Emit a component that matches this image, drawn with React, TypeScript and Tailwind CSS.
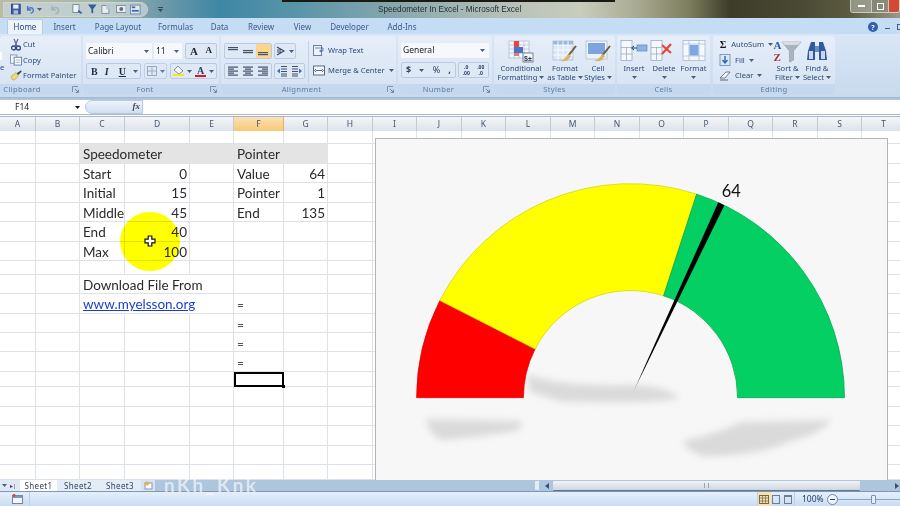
import React from "react";

const colLabels = ["A","B","C","D","E","F","G","H","I","J","K","L","M","N","O","P","Q","R","S","T"];
const colW = [36,44,45,65,44,50,44,45,44,45,44,45,44,45,44,45,44,45,44,44];
const rowH = [13,20,19,20,19,20,19,14,19,20,19,19,20,15,20,19,20,19,15];

type Cell = { t?: string; right?: boolean; span?: number; cls?: string };
const eq = "!text-[#555] !text-[12px]";
const data: Record<number, Record<number, Cell>> = {
  1: { 2: { t: "Speedometer", span: 3, cls: "bg-[#e4e4e4] !border-transparent" }, 5: { t: "Pointer", span: 2, cls: "bg-[#e4e4e4] !border-transparent" } },
  2: { 2: { t: "Start" }, 3: { t: "0", right: true }, 5: { t: "Value" }, 6: { t: "64", right: true } },
  3: { 2: { t: "Initial" }, 3: { t: "15", right: true }, 5: { t: "Pointer" }, 6: { t: "1", right: true } },
  4: { 2: { t: "Middle" }, 3: { t: "45", right: true }, 5: { t: "End" }, 6: { t: "135", right: true } },
  5: { 2: { t: "End" }, 3: { t: "40", right: true } },
  6: { 2: { t: "Max" }, 3: { t: "100", right: true } },
  8: { 2: { t: "Download File From", span: 3 } },
  9: { 2: { t: "www.myelsson.org", span: 3, cls: "!text-[#1a3fd0] underline" }, 5: { t: "=", cls: eq } },
  10: { 5: { t: "=", cls: eq } },
  11: { 5: { t: "=", cls: eq } },
  12: { 5: { t: "=", cls: eq } },
};

function Sheet() {
  const out: React.ReactNode[] = [];
  rowH.forEach((_, r) => {
    let c = 0;
    while (c < colW.length) {
      const d = data[r]?.[c];
      const span = d?.span ?? 1;
      out.push(
        <div
          key={r + "-" + c}
          style={{ gridColumn: `span ${span}` }}
          className={
            "flex items-center whitespace-nowrap pl-[3px] pr-[2px] pt-[3px] border-r border-b border-[#dde2e8] text-[13.5px] leading-none text-[#2a2a2a] " +
            (d?.right ? "justify-end " : "") +
            (d?.cls ?? "")
          }
        >
          {d?.t}
        </div>
      );
      c += span;
    }
  });
  return (
    <div className="grid grid-cols-[36px_44px_45px_65px_44px_50px_44px_45px_44px_45px_44px_45px_44px_45px_44px_45px_44px_45px_44px_44px] grid-rows-[13px_20px_19px_20px_19px_20px_19px_14px_19px_20px_19px_19px_20px_15px_20px_19px_20px_19px_15px] font-['Lato',sans-serif] w-[910px]">
      {out}
    </div>
  );
}

const CX = 630.5;
const CY = 397.5;
function pt(r: number, deg: number) {
  const a = (deg * Math.PI) / 180;
  return `${(CX - r * Math.cos(a)).toFixed(2)} ${(CY - r * Math.sin(a)).toFixed(2)}`;
}
function seg(r0: number, r1: number, a0: number, a1: number) {
  return `M${pt(r1, a0)} A${r1} ${r1} 0 0 1 ${pt(r1, a1)} L${pt(r0, a1)} A${r0} ${r0} 0 0 0 ${pt(r0, a0)} Z`;
}

function Gauge() {
  return (
    <svg viewBox="375 138 513 342" className="block w-full h-full">
      <defs>
        <filter id="sh" x="-20%" y="-50%" width="140%" height="200%">
          <feGaussianBlur stdDeviation="3.6" />
        </filter>
        <linearGradient id="nd" x1="0" y1="1" x2="0" y2="0">
          <stop offset="0" stopColor="#000" stopOpacity="0.25" />
          <stop offset="0.12" stopColor="#000" />
        </linearGradient>
      </defs>
      <g fill="#dadada" filter="url(#sh)">
        <path d="M526 374 Q560 386 620 385 Q662 383 680 398 Q640 405 560 401 L530 392 Z" />
        <path d="M425 419 L521 421 L519 430 Q470 439 440 440 Q427 433 425 419 Z" />
        <path d="M683 441 Q720 433 741 422 L832 420 Q825 432 790 442 Q750 458 702 456 Q686 450 683 441 Z" />
      </g>
      <path d={seg(107.5, 214.8, 0, 27)} fill="#ff0000" stroke="#e00000" strokeWidth="0.7" />
      <path d={seg(107.5, 214.8, 27, 108)} fill="#ffff00" stroke="#d0d000" strokeWidth="0.7" />
      <path d={seg(107.5, 214.8, 108, 180)} fill="#03cf62" stroke="#02a850" strokeWidth="0.8" />
      <path d={`M${pt(5, 115.2)} L${pt(215, 114.2)} L${pt(215, 116)} Z`} fill="url(#nd)" />
      <text x="722" y="196" fontFamily="Lato, sans-serif" fontSize="16.5" fill="#111">64</text>
    </svg>
  );
}

/* ---------- small icons ---------- */
const Save = () => (
  <svg width="11" height="12" viewBox="0 0 11 12"><rect x="0.5" y="0.5" width="10" height="11" fill="#3c5db0" stroke="#27408a" /><rect x="2.5" y="1" width="6" height="4.5" fill="#e9eef8" /><rect x="3" y="7.5" width="5" height="4" fill="#aebde0" /></svg>
);
const Undo = ({ c = "#4a76c4" }: { c?: string }) => (
  <svg width="11" height="11" viewBox="0 0 11 11" fill="none"><path d="M3 1.5 V6 H7 M3.4 5.6 C5 2.5 9 3 9.5 6 C9.7 8 8 9.5 6.5 10" stroke={c} strokeWidth="1.6" /></svg>
);
const Caret = ({ c = "#4a5f7c" }: { c?: string }) => (
  <svg width="5" height="3" viewBox="0 0 5 3" className="shrink-0"><path d="M0 0 H5 L2.5 3 Z" fill={c} /></svg>
);
const Lines = ({ kind }: { kind: "l" | "c" | "r" | "t" | "m" | "b" }) => {
  const rows = kind === "t" ? [2, 4] : kind === "m" ? [5, 7] : kind === "b" ? [8, 10] : [1.5, 3.5, 5.5, 7.5, 9.5];
  return (
    <svg width="12" height="12" viewBox="0 0 12 12">
      {rows.map((y, i) => {
        const short = i % 2 === 1 && rows.length > 2;
        const w = short ? 6 : 10;
        const x = kind === "c" ? (12 - w) / 2 : kind === "r" ? 11 - w : 1;
        return <rect key={y} x={x} y={y} width={w} height="1.2" fill="#44506a" />;
      })}
    </svg>
  );
};
const Indent = ({ flip }: { flip?: boolean }) => (
  <svg width="12" height="12" viewBox="0 0 12 12" style={{ transform: flip ? "scaleX(-1)" : undefined }}>
    {[1, 3.5, 6, 8.5, 10.5].map((y) => <rect key={y} x="5" y={y} width="6" height="1" fill="#44506a" />)}
    <path d="M4 3.5 L1 6 L4 8.5 Z" fill="#3a70b8" />
  </svg>
);
const Launcher = () => (
  <svg width="7" height="7" viewBox="0 0 7 7" fill="none"><path d="M0.5 6 V0.5 H6" stroke="#7e93ad" /><path d="M3 3 L6.2 6.2 M6.4 3.8 V6.4 H3.8" stroke="#5d7aa0" strokeWidth="0.9" /></svg>
);

const Scissors = () => (
  <svg width="12" height="13" viewBox="0 0 12 13" fill="none"><path d="M4 1 L7 8 M8 1 L5 8" stroke="#5b6a80" strokeWidth="1.2" /><circle cx="3.6" cy="10" r="2" stroke="#2f4a80" strokeWidth="1.3" /><circle cx="8.4" cy="10" r="2" stroke="#2f4a80" strokeWidth="1.3" /></svg>
);
const CopyIco = () => (
  <svg width="13" height="12" viewBox="0 0 13 12"><rect x="0.5" y="0.5" width="7" height="9" fill="#f4f7fb" stroke="#7e94b4" /><rect x="4.5" y="3" width="8" height="8.5" fill="#ffffff" stroke="#5d7ca8" /><rect x="6" y="5.5" width="5" height="1" fill="#9db2cf" /><rect x="6" y="8" width="5" height="1" fill="#9db2cf" /></svg>
);
const Brush = () => (
  <svg width="14" height="13" viewBox="0 0 14 13"><path d="M1 8 L7 3 L10 7 L5 12 Q2 12 1 8 Z" fill="#efd77c" stroke="#a88a3a" strokeWidth="0.6" /><path d="M8 4 L13 0.5 L13.5 2 L9.5 6 Z" fill="#36404e" /></svg>
);

const BigGrid = ({ children }: { children?: React.ReactNode }) => (
  <svg width="28" height="24" viewBox="0 0 28 24">
    {children}
  </svg>
);
const CondIco = () => (
  <BigGrid>
    <rect x="2" y="2" width="20" height="17" fill="#f2f6fb" stroke="#9cb0c8" strokeWidth="0.6" />
    {[7, 12, 17].map((x) => <path key={x} d={`M${x} 2 V19`} stroke="#a8bace" strokeWidth="0.6" />)}
    {[6, 10, 14].map((y) => <path key={y} d={`M2 ${y} H22`} stroke="#a8bace" strokeWidth="0.6" />)}
    <rect x="7" y="2" width="5" height="6" fill="#e64545" />
    <rect x="7" y="8" width="9" height="6" fill="#4a74c8" />
    <rect x="7" y="14" width="5" height="3" fill="#e97b6c" />
    <rect x="16" y="14" width="10" height="9" fill="#f6f7fa" stroke="#5a6a80" strokeWidth="0.8" />
    <text x="17" y="21.5" fontSize="7" fontWeight="700" fill="#2a3650" fontFamily="Liberation Sans, sans-serif">$±</text>
  </BigGrid>
);
const TableIco = () => (
  <BigGrid>
    <rect x="2" y="2" width="20" height="19" fill="#dbe6f6" stroke="#9cb0c8" strokeWidth="0.6" />
    <rect x="2" y="2" width="20" height="4" fill="#9db8de" />
    {[7, 12, 17].map((x) => <path key={x} d={`M${x} 2 V21`} stroke="#fff" strokeWidth="0.8" />)}
    {[6, 11, 16].map((y) => <path key={y} d={`M2 ${y} H22`} stroke="#fff" strokeWidth="0.8" />)}
    <path d="M25 7 L17 17" stroke="#6d5a38" strokeWidth="2" />
    <path d="M18 15 L14 19 Q12 21 9 22 Q14 23 17 21 L20 17 Z" fill="#d8b55e" />
  </BigGrid>
);
const StylesIco = () => (
  <BigGrid>
    <rect x="2" y="2" width="21" height="18" fill="#eef3fa" stroke="#9cb0c8" strokeWidth="0.6" />
    <rect x="4" y="4" width="17" height="11" fill="#7da3e0" />
    <path d="M26 7 L18 17" stroke="#6d5a38" strokeWidth="2" />
    <path d="M19 15 L15 19 Q13 21 10 22 Q15 23 18 21 L21 17 Z" fill="#d8b55e" />
  </BigGrid>
);
const cellsGrid = (
  <>
    <rect x="1" y="1.5" width="11" height="20" fill="#f5f8fc" stroke="#8fa3bd" strokeWidth="0.7" />
    <path d="M1 8.5 H12 M1 15 H12 M6.5 8.5 V21" stroke="#8fa3bd" strokeWidth="0.7" />
  </>
);
const InsertIco = () => (
  <BigGrid>
    {cellsGrid}
    <rect x="17" y="6" width="10" height="6" fill="#8fb2e4" stroke="#5b84c0" strokeWidth="0.7" />
    <path d="M12 9 H17 M14 7 L11.5 9 L14 11" stroke="#1f3f74" strokeWidth="1" fill="none" />
  </BigGrid>
);
const DeleteIco = () => (
  <BigGrid>
    {cellsGrid}
    <path d="M12 6 L21 14 M21 5 L12 15" stroke="#e0483a" strokeWidth="2.2" />
  </BigGrid>
);
const FormatIco = () => (
  <BigGrid>
    <rect x="3" y="1.5" width="22" height="20" fill="#f5f8fc" stroke="#9fb1c8" strokeWidth="0.7" />
    <path d="M3 5 H25 M9 1.5 V21.5 M19 1.5 V21.5 M3 17 H25" stroke="#a8bace" strokeWidth="0.7" />
    <rect x="9.5" y="6" width="9" height="10.5" fill="#7ea7e6" />
  </BigGrid>
);
const SortIco = () => (
  <svg width="30" height="24" viewBox="0 0 30 24">
    <text x="0.5" y="10" fontSize="11" fontWeight="700" fill="#2b5cab" fontFamily="Liberation Serif, serif">A</text>
    <text x="0.5" y="22" fontSize="11" fontWeight="700" fill="#a3313d" fontFamily="Liberation Serif, serif">Z</text>
    <path d="M9 3 H28 L20.5 12 V21 L16.5 23 V12 Z" fill="#aab4be" stroke="#7f8b97" strokeWidth="0.5" />
    <path d="M9 3 H28 L25 6 H12 Z" fill="#d8dde3" />
  </svg>
);
const BinoIco = () => (
  <svg width="22" height="22" viewBox="0 0 22 22">
    <path d="M2 11 L5 2 H9 V20 H1 Z" fill="#2f5a9e" />
    <path d="M20 11 L17 2 H13 V20 H21 Z" fill="#2f5a9e" />
    <rect x="9" y="6" width="4" height="6" fill="#6d8cc0" />
    <rect x="3" y="11" width="4" height="8" fill="#c9d8ef" />
    <rect x="15" y="11" width="4" height="8" fill="#c9d8ef" />
  </svg>
);

function Group({ w, label, children, launch, labelCls = "" }: { w: string; label: string; children: React.ReactNode; launch?: boolean; labelCls?: string }) {
  return (
    <div className={"flex flex-col shrink-0 h-[59px] rounded-[3px] overflow-hidden bg-gradient-to-b from-[#e6eef9] to-[#d5e2f3] " + w}>
      <div className="flex-1 relative min-h-0">{children}</div>
      <div className={"relative h-[11px] bg-[#c5d8ee] text-center text-[7.6px] leading-[11px] text-[#5d7da6] tracking-[0.3px] " + labelCls}>
        {label}
        {launch && <span className="absolute right-[2px] top-[2px]"><Launcher /></span>}
      </div>
    </div>
  );
}
const Box = ({ w, children, cls = "" }: { w: string; children?: React.ReactNode; cls?: string }) => (
  <div className={"flex items-center justify-around h-[16px] rounded-[2px] border border-[#b9cbe2] bg-[#dfe9f6] " + w + " " + cls}>{children}</div>
);
const Big = ({ w, icon, a, b, caret }: { w: string; icon: React.ReactNode; a: string; b?: string; caret?: boolean }) => (
  <div className={"flex flex-col items-center pt-[3px] shrink-0 " + w}>
    <div className="h-[24px] flex items-center justify-center">{icon}</div>
    <div className="mt-[1px] text-[7.6px] leading-[9px] text-[#2e4a75] text-center whitespace-nowrap">{a}</div>
    <div className="flex items-center justify-center gap-[2px] h-[9px] text-[7.6px] leading-[9px] text-[#2e4a75] whitespace-nowrap">
      {b}
      {caret && <Caret />}
    </div>
  </div>
);

function Ribbon() {
  return (
    <div className="flex gap-[2px] h-[63px] pt-[2px] bg-gradient-to-b from-[#d9e6f5] to-[#c9daee] font-['Noto_Sans',sans-serif] text-[#2e4a75]">
      <Group w="w-[81px]" label="Clipboard" launch labelCls="pr-[37px]">
        <div className="absolute left-0 top-[16px] w-[2px] h-[8px] bg-white" />
        <span className="absolute left-0 top-[27px] text-[7.6px] leading-[9px]">e</span>
        <div className="flex flex-col pl-[10px] pt-[1px] text-[7.6px]">
          {[
            [<Scissors key="s" />, "Cut"],
            [<CopyIco key="c" />, "Copy"],
            [<Brush key="b" />, "Format Painter"],
          ].map(([ic, t], i) => (
            <div key={i} className="flex items-center gap-[1px] h-[15.5px] whitespace-nowrap">
              <span className="w-[12px] flex justify-center">{ic}</span>
              {t}
            </div>
          ))}
        </div>
      </Group>
      <Group w="w-[136px]" label="Font" launch labelCls="pr-[12px]">
        <div className="flex flex-col gap-[4px] pl-[3px] pt-[7px]">
          <div className="flex gap-[2px]">
            <div className="flex items-center justify-between pl-[2px] pr-[3px] h-[16px] w-[66px] bg-[#f5f8fc] text-[8.5px] text-[#222]">Calibri<Caret /></div>
            <div className="flex items-center justify-between pl-[2px] pr-[3px] h-[16px] w-[28px] bg-[#f5f8fc] text-[8.5px] text-[#222]">11<Caret /></div>
            <Box w="w-[32px] ml-[1px]">
              <span className="text-[11px] font-bold font-['Liberation_Serif',serif] text-[#223]">A</span>
              <span className="text-[9px] font-bold font-['Liberation_Serif',serif] text-[#223]">A</span>
            </Box>
          </div>
          <div className="flex gap-[3px]">
            <Box w="w-[55px]" cls="!justify-between pl-[4px] pr-[2px] font-['Liberation_Serif',serif] text-[10px] text-[#1c2a44]">
              <b>B</b><i className="font-bold">I</i><b className="underline ml-[3px]">U</b><Caret />
            </Box>
            <Box w="w-[23px]" cls="opacity-80">
              <svg width="10" height="10" viewBox="0 0 10 10" fill="none" stroke="#8d9db3"><rect x="0.5" y="0.5" width="9" height="9" /><path d="M5 0 V10 M0 5 H10" /></svg>
              <Caret />
            </Box>
            <Box w="w-[47px]">
              <span className="flex flex-col items-center">
                <svg width="11" height="8" viewBox="0 0 11 8"><path d="M5 0 L10 5 L6 8 L1 4 Z" fill="#f4f6fa" stroke="#5a6a80" strokeWidth="0.7" /></svg>
                <span className="w-[11px] h-[2px] bg-[#f2ec1e]" />
              </span>
              <Caret />
              <span className="flex flex-col items-center leading-none">
                <span className="text-[10px] h-[9px] leading-[9px] font-bold font-['Liberation_Serif',serif] text-[#2b3e66]">A</span>
                <span className="w-[11px] h-[2px] bg-[#e0141c]" />
              </span>
              <Caret />
            </Box>
          </div>
        </div>
      </Group>
      <Group w="w-[175px]" label="Alignment" launch labelCls="pr-[14px]">
        <div className="flex">
          <div className="flex flex-col gap-[4px] pl-[3px] pt-[7px] w-[87px]">
            <div className="flex gap-[2px]">
              <Box w="w-[48px]" cls="!justify-between overflow-hidden">
                <span className="w-[16px] flex justify-center"><Lines kind="t" /></span>
                <span className="w-[16px] flex justify-center"><Lines kind="m" /></span>
                <span className="w-[16px] h-full flex justify-center bg-[#fbd58b]"><Lines kind="b" /></span>
              </Box>
              <Box w="w-[22px]">
                <svg width="11" height="10" viewBox="0 0 11 10"><path d="M1 1 L8 5 L1 9 M1 4 H5 M1 6 H5" stroke="#34425e" strokeWidth="1.1" fill="none" /></svg>
                <Caret />
              </Box>
            </div>
            <div className="flex gap-[2px]">
              <Box w="w-[48px]"><Lines kind="l" /><Lines kind="c" /><Lines kind="r" /></Box>
              <Box w="w-[31px]"><Indent /><Indent flip /></Box>
            </div>
          </div>
          <div className="w-px h-[42px] mt-[5px] bg-[#c2d2e6]" />
          <div className="flex flex-col gap-[5px] pl-[4px] pt-[7px] text-[7.6px] whitespace-nowrap">
            <div className="flex items-center gap-[3px] h-[15px]">
              <svg width="12" height="11" viewBox="0 0 12 11"><rect x="0.5" y="0.5" width="8" height="10" fill="#eef3fa" stroke="#6f7f96" /><path d="M2 3 H10 V6 H7 M8 5 L6.5 6 L8 7" stroke="#3a6ab0" fill="none" strokeWidth="0.8" /></svg>
              Wrap Text
            </div>
            <div className="flex items-center gap-[3px] h-[15px]">
              <svg width="12" height="11" viewBox="0 0 12 11"><rect x="0.5" y="1" width="11" height="9" fill="#f2f5fa" stroke="#5d6b80" /><path d="M3 5.5 H9 M3 4 L1.6 5.5 L3 7 M9 4 L10.4 5.5 L9 7" stroke="#34425e" fill="none" strokeWidth="0.8" /></svg>
              Merge &amp; Center
              <span className="ml-[1px]"><Caret /></span>
            </div>
          </div>
        </div>
      </Group>
      <Group w="w-[94px]" label="Number" launch labelCls="pr-[13px]">
        <div className="flex flex-col gap-[4px] pl-[3px] pt-[7px]">
          <div className="flex items-center justify-between pl-[2px] pr-[4px] h-[15px] w-[88px] bg-[#f5f8fc] text-[8.5px] text-[#222]">General<Caret /></div>
          <div className="flex gap-[2px]">
            <Box w="w-[55px]" cls="text-[9px] font-bold text-[#2c3d60]">
              <span>$</span><Caret /><span className="font-normal">%</span><span>,</span>
            </Box>
            <Box w="w-[31px]" cls="text-[5px] leading-[6px] text-[#2c3d60] font-bold">
              <span className="flex flex-col items-center"><span>.0</span><span>.00</span></span>
              <span className="flex flex-col items-center"><span>.00</span><span>.0</span></span>
            </Box>
          </div>
        </div>
      </Group>
      <Group w="w-[121px]" label="Styles">
        <div className="flex">
          <Big w="w-[54px]" icon={<CondIco />} a="Conditional" b="Formatting" caret />
          <Big w="w-[34px]" icon={<TableIco />} a="Format" b="as Table" caret />
          <Big w="w-[32px]" icon={<StylesIco />} a="Cell" b="Styles" caret />
        </div>
      </Group>
      <Group w="w-[93px]" label="Cells">
        <div className="flex pl-[2px]">
          <Big w="w-[30px]" icon={<InsertIco />} a="Insert" caret />
          <Big w="w-[30px]" icon={<DeleteIco />} a="Delete" caret />
          <Big w="w-[29px]" icon={<FormatIco />} a="Format" caret />
        </div>
      </Group>
      <Group w="w-[122px] ml-[1px]" label="Editing">
        <div className="flex">
          <div className="flex flex-col pl-[6px] pt-[1px] w-[60px] text-[7.6px] whitespace-nowrap">
            <div className="flex items-center gap-[4px] h-[15.5px]">
              <span className="w-[12px] text-center text-[10px] font-bold font-['Liberation_Serif',serif] text-[#111]">Σ</span>AutoSum<Caret />
            </div>
            <div className="flex items-center gap-[4px] h-[15.5px]">
              <svg width="12" height="12" viewBox="0 0 12 12"><rect x="1" y="0.5" width="10" height="11" fill="#dbe6f6" stroke="#7f9ac0" /><path d="M6 2 V8 M3.5 6 L6 9 L8.5 6" stroke="#2e62b8" strokeWidth="1.4" fill="none" /></svg>
              Fill<Caret />
            </div>
            <div className="flex items-center gap-[4px] h-[15.5px]">
              <svg width="12" height="11" viewBox="0 0 12 11"><path d="M1 8 L7 2 H11 L6 8 Z" fill="#f6f7fa" stroke="#55606f" strokeWidth="0.8" /><path d="M1 10 H9" stroke="#55606f" /></svg>
              Clear<Caret />
            </div>
          </div>
          <Big w="w-[29px]" icon={<SortIco />} a="Sort &" b="Filter" caret />
          <Big w="w-[30px]" icon={<BinoIco />} a="Find &" b="Select" caret />
        </div>
      </Group>
    </div>
  );
}

export default function App() {
  const tabs: [string, string][] = [
    ["Insert", "w-[43px]"], ["Page Layout", "w-[64px]"], ["Formulas", "w-[51px]"], ["Data", "w-[37px]"],
    ["Review", "w-[46px]"], ["View", "w-[37px]"], ["Developer", "w-[57px]"], ["Add-Ins", "w-[48px]"],
  ];
  return (
    <div className="relative flex flex-col w-[900px] h-[506px] overflow-hidden bg-white font-['Noto_Sans',sans-serif] blur-[0.4px]">
      {/* title bar */}
      <div className="relative flex items-center justify-between h-[18px] bg-[linear-gradient(90deg,#b8bca0_0px,#a8b8a8_100px,#6f9aa8_160px,#3f87a6_220px,#5a95a8_300px,#8aa8ac_400px,#b4bfb6_500px,#c8cdbd_580px,#a8a890_640px,#7c7c5e_690px,#3c3c28_730px,#4a4a34_800px,#5c5a40_850px,#9a9a88_900px)]">
        <div className="flex items-center gap-[4px] ml-[3px] pl-[7px] pr-[6px] h-[15px] w-[145px] rounded-r-[9px] border border-[#cfd6cf] bg-[#c9d7e0]/70">
          <Save />
          <Undo />
          <span className="ml-[-1px]"><Caret /></span>
          <span className="opacity-40 ml-[3px]"><Undo c="#7f8f9f" /></span>
          <svg className="ml-[8px]" width="12" height="12" viewBox="0 0 12 12"><rect x="1" y="1" width="7" height="9" fill="#f1f4f8" stroke="#6f84a0" /><path d="M7 8 L11 11" stroke="#2b5fa8" strokeWidth="2" /></svg>
          <svg width="12" height="12" viewBox="0 0 12 12"><path d="M1 1 H11 L7 6 V11 L5 10 V6 Z" fill="#2e5e9e" /></svg>
          <svg width="12" height="12" viewBox="0 0 12 12"><rect x="1" y="2" width="8" height="9" fill="#e9edf2" stroke="#7a8794" /><rect x="6" y="0.5" width="5" height="6" fill="#b8c4d0" /></svg>
          <svg width="12" height="12" viewBox="0 0 12 12"><rect x="0.5" y="2" width="11" height="8" fill="#e9edf2" stroke="#7a8794" /><circle cx="6" cy="6" r="2.2" fill="#66717e" /></svg>
          <svg width="12" height="11" viewBox="0 0 12 11"><rect x="0.5" y="0.5" width="11" height="10" fill="#e2e8f0" stroke="#6f84a0" /><rect x="2" y="2" width="4" height="2" fill="#3a6ab0" /><rect x="2" y="6" width="8" height="2" fill="#3a6ab0" /></svg>
        </div>
        <div className="ml-[5px] flex flex-col items-center gap-[1px] mr-auto pl-[5px]">
          <span className="w-[5px] h-px bg-[#33455e]" />
          <Caret c="#33455e" />
        </div>
        <div className="absolute left-[282px] top-0 w-[333px] h-[2px] bg-[#1a1a14]" />
        <div className="absolute left-[378px] top-[3px] font-['Liberation_Sans',sans-serif] text-[8.2px] leading-[14px] text-[#1e2a30] whitespace-nowrap">Speedometer In Excel - Microsoft Excel</div>
        <div className="flex h-[13px] self-start w-[50px] rounded-b-[3px] border border-[#dfe2dc]/80 border-t-0 overflow-hidden">
          <div className="flex items-center justify-center w-[22px] bg-[#a8ab9e]/70 border-r border-[#dfe2dc]/70"><span className="w-[7px] h-[2px] bg-white" /></div>
          <div className="flex items-center justify-center w-[18px] bg-[#8b8d7e]/70 border-r border-[#dfe2dc]/70"><span className="w-[7px] h-[7px] border border-white" /></div>
          <div className="w-[10px] bg-[#d24a36]" />
        </div>
      </div>
      {/* tabs */}
      <div className="flex items-end h-[16px] pl-[7px] bg-[#c5dcf5] text-[8px] text-[#3a5a88]">
        <div className="flex items-center justify-center w-[36px] h-[15px] rounded-t-[2px] bg-[#edf3fa] border border-b-0 border-[#b5cae4] text-[#2c4a78]">Home</div>
        {tabs.map(([t, w]) => (
          <div key={t} className={"flex items-center justify-center h-[15px] whitespace-nowrap " + w}>{t}</div>
        ))}
        <div className="ml-auto flex items-center gap-[7px] pb-[2px] translate-x-[3px]">
          <span className="flex items-center justify-center w-[10px] h-[10px] rounded-full bg-[#2f5fb0] text-[7px] font-bold leading-none text-white">?</span>
          <span className="w-[5px] h-px mt-[3px] bg-[#4b5d75]" />
          <span className="w-[6px] h-[6px] border border-[#4b5d75]" />
        </div>
      </div>
      <Ribbon />
      <div className="h-[3px] bg-gradient-to-b from-[#9fb7d2] to-[#b7cbe2]" />
      {/* formula bar */}
      <div className="flex items-center h-[15px] bg-white border-b border-[#a9b8cc]">
        <div className="flex items-center justify-between w-[81px] pl-[15px] pr-[1px] text-[8.5px] text-[#222]">F14<Caret c="#111" /></div>
        <div className="flex items-center justify-end ml-[4px] w-[58px] h-[14px] rounded-l-[7px] border border-[#b8c9de] bg-gradient-to-b from-[#eef4fb] to-[#cfdeef] pr-[2px]">
          <i className="font-['Liberation_Serif',serif] text-[9px] font-bold text-[#3a4a60]">fx</i>
        </div>
      </div>
      <div className="h-px bg-white" />
      {/* column header */}
      <div className="flex h-[15px] border-t border-[#a9b8cc] text-[8.5px] text-[#44566e]">
        {colLabels.map((l, i) => (
          <div
            key={l}
            style={{ width: colW[i] }}
            className={
              "shrink-0 flex items-center justify-center border-r " +
              (l === "F"
                ? "bg-gradient-to-b from-[#fbe2b4] to-[#f8c877] border-[#e2b060]"
                : "bg-gradient-to-b from-[#f4f6f9] to-[#dde3ea] border-[#c2ccd8]")
            }
          >
            {l}
          </div>
        ))}
      </div>
      {/* sheet */}
      <div className="relative h-[349px] overflow-hidden">
        <Sheet />
        <div className="absolute left-[234px] top-[241px] w-[50px] h-[15px] border-2 border-black" />
        <div className="absolute left-[282px] top-[254px] w-[3px] h-[3px] bg-black" />
        <div className="absolute left-[120px] top-[81px] w-[60px] h-[59px] rounded-full bg-[#ffff00] mix-blend-multiply" />
        <svg className="absolute left-[144px] top-[104px]" width="12" height="12" viewBox="0 0 12 12">
          <path d="M4.2 1 H7.8 V4.2 H11 V7.8 H7.8 V11 H4.2 V7.8 H1 V4.2 H4.2 Z" fill="#fff" stroke="#111" strokeWidth="1.2" />
        </svg>
        <div className="absolute left-[375px] top-[7px] w-[513px] h-[342px] border border-[#b4b4b4] border-b-0 bg-[#f7f7f7]">
          <Gauge />
        </div>
      </div>
      {/* sheet tabs + scrollbar */}
      <div className="relative z-10 flex items-center h-[11px] bg-[#aec5de] text-[8px] text-[#33465f]">
        <div className="flex items-center gap-[3px] w-[20px] h-full bg-[#dfe9f5] pl-[2px]">
          <Caret /><span className="text-[6px] leading-none">▸|</span>
        </div>
        <div className="flex items-center justify-center w-[37px] h-full bg-white tracking-[0.4px]">Sheet1</div>
        <div className="flex items-center justify-center w-[42px] h-full bg-[#e4edf7] tracking-[0.4px]">Sheet2</div>
        <div className="flex items-center justify-center w-[42px] h-full bg-[#e4edf7] tracking-[0.4px]">Sheet3</div>
        <div className="flex items-center justify-center w-[14px] h-full bg-[#d6e3f2]">
          <svg width="9" height="9" viewBox="0 0 9 9"><rect x="1" y="2" width="7" height="6" fill="#fff" stroke="#8a97a8" /><circle cx="3" cy="2.5" r="2" fill="#e8b040" /></svg>
        </div>
        <span className="absolute left-[164px] top-[-5px] text-[19px] leading-[20px] font-bold text-white/60 font-['Lato',sans-serif] whitespace-nowrap tracking-[2.5px]">nKh_Knk</span>
        <div className="absolute left-[535px] w-[4px] h-[9px] bg-[#e3ebf4]" />
        <div className="absolute left-[545px] flex items-center"><svg width="4" height="6" viewBox="0 0 4 6"><path d="M4 0 V6 L0 3 Z" fill="#3a5070" /></svg></div>
        <div className="absolute left-[553px] flex items-center justify-center w-[307px] h-[10px] rounded-[1px] bg-gradient-to-b from-[#f1f4f8] to-[#cdd6e0] border-b border-[#5f7591]">
          <span className="w-[5px] h-[5px] border-x border-[#9aa7b7]" />
        </div>
        <div className="absolute left-[895px] flex items-center"><svg width="4" height="6" viewBox="0 0 4 6"><path d="M0 0 V6 L4 3 Z" fill="#3a5070" /></svg></div>
      </div>
      {/* status bar */}
      <div className="flex items-center h-[15px] bg-gradient-to-b from-[#e5effb] to-[#c9ddf3] border-t border-[#7f97b3] text-[8.5px] text-[#20406e]">
        <div className="ml-[12px] mr-auto pr-[6px] border-r border-[#bcd0e6] h-full flex items-center">
          <svg width="11" height="10" viewBox="0 0 11 10"><rect x="0.5" y="1.5" width="10" height="8" fill="#f3f6fa" stroke="#6f84a0" /><rect x="0.5" y="1.5" width="10" height="2.5" fill="#7c98c0" /><circle cx="2" cy="1.5" r="1.4" fill="#d8442e" /></svg>
        </div>
        <div className="flex items-center w-[38px] h-full border-x border-[#bcd0e6]">
          <span className="flex items-center justify-center w-[13px] h-full bg-[#fbe0a8]">
            <svg width="10" height="9" viewBox="0 0 10 9" fill="none" stroke="#6a6a5a"><rect x="0.5" y="0.5" width="9" height="8" /><path d="M3.5 0 V9 M6.5 0 V9 M0 3 H10 M0 6 H10" strokeWidth="0.7" /></svg>
          </span>
          <span className="flex items-center justify-center w-[12px]"><span className="block w-[8px] h-[9px] border border-[#6c7e94]" /></span>
          <span className="flex items-center justify-center w-[12px]"><span className="block w-[8px] h-[9px] border border-[#6c7e94] border-t-2" /></span>
        </div>
        <span className="ml-[7px] w-[19px]">100%</span>
        <span className="ml-[6px] flex items-center justify-center w-[11px] h-[11px] rounded-full border border-[#6d87a8] bg-[#f0f5fb]">
          <span className="w-[5px] h-px bg-[#2a4468]" />
        </span>
        <div className="relative w-[62px] h-px bg-[#8ea6c2]">
          <span className="absolute left-[33px] top-[-4px] w-[5px] h-[9px] rounded-[1px] bg-[#e8eef6] border border-[#7d93ae]" />
        </div>
      </div>
    </div>
  );
}
